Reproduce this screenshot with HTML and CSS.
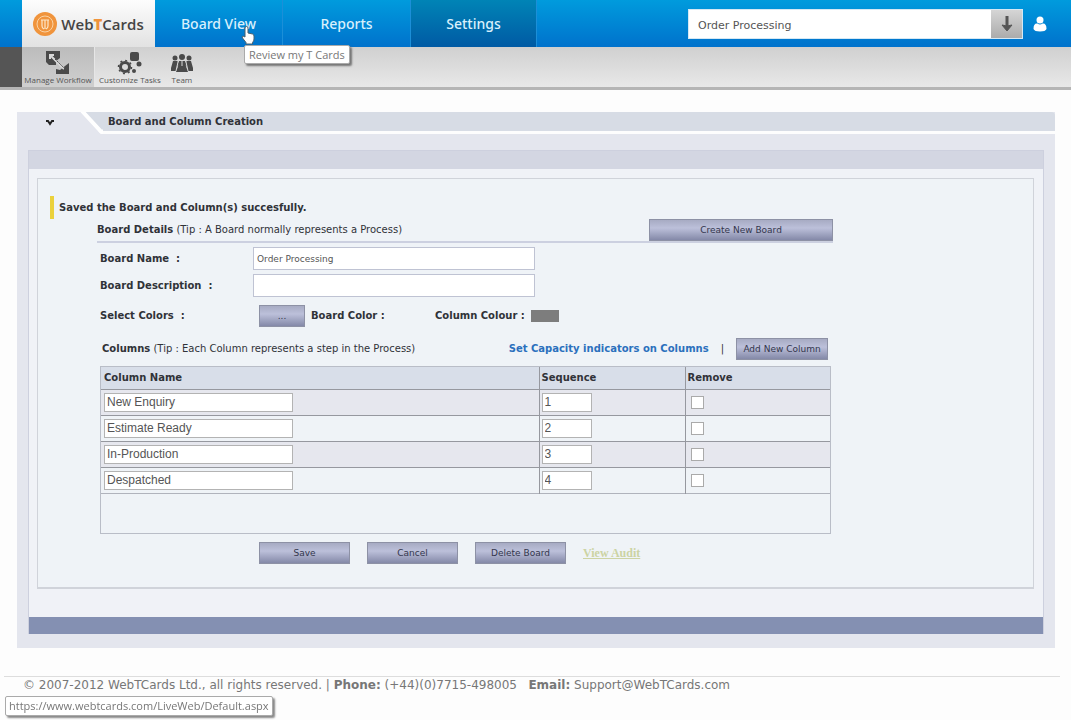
FILE: index.html
```html
<!DOCTYPE html>
<html lang="en">
<head>
    <meta charset="utf-8">
    <title>WebTCards - Board and Column Creation</title>
    <link rel="stylesheet" href="styles.css">
</head>
<body>
    <header class="header">
        <a class="logo" href="#">
            <svg width="24" height="26" viewBox="0 0 24 26">
                <circle cx="12" cy="13" r="12" fill="#f0943c"/>
                <circle cx="12" cy="13" r="8" fill="none" stroke="#fbd3a4" stroke-width="1"/>
                <path d="M8 9h8M9 9v6q0 2 2 3M15 9v6q0 2-2 3M12 9v9" fill="none" stroke="#fde6c8" stroke-width="1.2"/>
            </svg>
            <span>Web<b>T</b>Cards</span>
        </a>
        <nav class="nav">
            <a href="#" class="nav-link">Board View
                <span class="tooltip">Review my T Cards</span>
                <svg class="pointer" width="14" height="19" viewBox="0 0 14 19">
                    <path d="M4 2q0-1.500 1.500-1.500T7 2v5l4.500 1Q13 8.500 13 10v3q0 2-1.500 3.500V18H5v-1.500L1.500 12Q.5 10.500 2 10l2 1z" fill="#fff" stroke="#49606f"/>
                </svg>
            </a>
            <a href="#" class="nav-link">Reports</a>
            <a href="#" class="nav-link active">Settings</a>
        </nav>
        <div class="board-picker">
            <select aria-label="Board"><option>Order Processing</option></select>
            <button aria-label="Open board">
                <svg width="14" height="18" viewBox="0 0 14 18"><path d="M7 1v11" stroke="#555" stroke-width="3"/><path d="M2 10q5 2 10 0l-5 6z" fill="#555" stroke="#555" stroke-linejoin="round"/></svg>
            </button>
        </div>
        <a class="user" href="#" aria-label="My account">
            <svg width="14" height="18" viewBox="0 0 14 18"><circle cx="7" cy="5" r="3.500" fill="#fff"/><path d="M.5 14q0-6 4-5.500 2.500 2 5 0 4-.5 4 5.500-1 2.500-6.500 2.500T.5 14z" fill="#fff"/></svg>
        </a>
    </header>

    <div class="toolbar">
        <a href="#" class="tool selected">
            <svg width="26" height="26" viewBox="0 0 26 26">
                <path d="M1 1h14v7l-4 3v4H4l-3-3z" fill="#4a4a4a"/>
                <path d="M24 13v11H11v-5l4 1 5-4z" fill="#4a4a4a"/>
                <path d="M5 5l14 14M5 9V5h4" fill="none" stroke="#d8d8d8" stroke-width="2"/>
                <path d="M10 9l11 11" stroke="#4a4a4a" stroke-width="1" stroke-dasharray="2 1"/>
            </svg>
            Manage Workflow
        </a>
        <a href="#" class="tool">
            <svg width="26" height="26" viewBox="0 0 26 26">
                <circle cx="8" cy="17" r="4.500" fill="none" stroke="#4a4a4a" stroke-width="3"/>
                <circle cx="8" cy="17" r="6.500" fill="none" stroke="#4a4a4a" stroke-width="1.500" stroke-dasharray="2 3"/>
                <rect x="13" y="2" width="9" height="9" rx="2" fill="#4a4a4a"/>
                <circle cx="22" cy="14" r="2.500" fill="#4a4a4a"/>
                <circle cx="17" cy="21" r="2" fill="#4a4a4a"/>
            </svg>
            Customize Tasks
        </a>
        <a href="#" class="tool">
            <svg width="26" height="26" viewBox="0 0 26 26" fill="#4a4a4a">
                <circle cx="6" cy="8" r="2.500"/><circle cx="13" cy="7" r="3"/><circle cx="20" cy="8" r="2.500"/>
                <path d="M4 11h4l2 2-2 4v4H2v-3zM18 11h4l2 7v3h-6v-4l-2-4zM10 11h6l1 5 2 6H7l2-6z"/>
                <path d="M9 12l-2 9M17 12l2 9M13 11v5" stroke="#dcdcdc"/>
            </svg>
            Team
        </a>
    </div>

    <main class="panel">
        <div class="panel-title">
            <svg class="panel-tab" width="86" height="22" viewBox="0 0 86 22">
                <path d="M0 0h64l20 22H0z" fill="#e4e6ee"/>
                <path d="M65 -1l19 20.500h2" fill="none" stroke="#fff" stroke-width="4"/>
                <path d="M29 9h2l2 3 2-3h2" fill="none" stroke="#222" stroke-width="2"/>
            </svg>
            <h1>Board and Column Creation</h1>
        </div>
        <div class="box">
            <div class="box-head"></div>
            <div class="box-body">
                <form class="content">
                    <p class="message">Saved the Board and Column(s) succesfully.</p>
                    <div class="form">
                        <div class="section-head">
                            <span><b>Board Details</b> (Tip : A Board normally represents a Process)</span>
                            <button type="button" class="btn create">Create New Board</button>
                        </div>
                        <div class="field">
                            <label for="name">Board Name &nbsp;:</label>
                            <input type="text" id="name" value="Order Processing">
                        </div>
                        <div class="field">
                            <label for="description">Board Description &nbsp;:</label>
                            <input type="text" id="description">
                        </div>
                        <div class="field colors">
                            <label for="colors">Select Colors &nbsp;:</label>
                            <button type="button" id="colors" class="btn pick">...</button>
                            <b class="board-color">Board Color :</b>
                            <b>Column Colour :</b>
                            <span class="swatch"></span>
                        </div>
                        <div class="columns-head">
                            <span><b>Columns</b> (Tip : Each Column represents a step in the Process)</span>
                            <a href="#" class="capacity">Set Capacity indicators on Columns</a>
                            <span class="divider">|</span>
                            <button type="button" class="btn add">Add New Column</button>
                        </div>
                        <div class="grid">
                            <table>
                                <thead>
                                    <tr><th class="col-name">Column Name</th><th class="col-seq">Sequence</th><th>Remove</th></tr>
                                </thead>
                                <tbody>
                                    <tr>
                                        <td><input type="text" class="name" aria-label="Column name 1" value="New Enquiry"></td>
                                        <td><input type="text" class="seq" aria-label="Sequence 1" value="1"></td>
                                        <td><input type="checkbox" aria-label="Remove New Enquiry"></td>
                                    </tr>
                                    <tr>
                                        <td><input type="text" class="name" aria-label="Column name 2" value="Estimate Ready"></td>
                                        <td><input type="text" class="seq" aria-label="Sequence 2" value="2"></td>
                                        <td><input type="checkbox" aria-label="Remove Estimate Ready"></td>
                                    </tr>
                                    <tr>
                                        <td><input type="text" class="name" aria-label="Column name 3" value="In-Production"></td>
                                        <td><input type="text" class="seq" aria-label="Sequence 3" value="3"></td>
                                        <td><input type="checkbox" aria-label="Remove In-Production"></td>
                                    </tr>
                                    <tr>
                                        <td><input type="text" class="name" aria-label="Column name 4" value="Despatched"></td>
                                        <td><input type="text" class="seq" aria-label="Sequence 4" value="4"></td>
                                        <td><input type="checkbox" aria-label="Remove Despatched"></td>
                                    </tr>
                                </tbody>
                            </table>
                        </div>
                        <div class="actions">
                            <button type="button" class="btn">Save</button>
                            <button type="button" class="btn">Cancel</button>
                            <button type="button" class="btn">Delete Board</button>
                            <a href="#" class="audit">View Audit</a>
                        </div>
                    </div>
                </form>
            </div>
            <div class="box-foot"></div>
        </div>
    </main>

    <footer class="footer">
        © 2007-2012 WebTCards Ltd., all rights reserved. | <b>Phone:</b> (+44)(0)7715-498005 &nbsp; <b>Email:</b> Support@WebTCards.com
    </footer>
    <div class="status">https://www.webtcards.com/LiveWeb/Default.aspx</div>
</body>
</html>
```

FILE: styles.css
```css
* { box-sizing: border-box; }
body { margin: 0; background: #fdfdfd; color: #303238; font: 10px/12px "DejaVu Sans", Verdana, sans-serif; }
a { text-decoration: none; }
button, input, select { font-family: inherit; margin: 0; }

/* top bar */
.header { display: flex; align-items: center; height: 47px; padding-left: 22px; background: linear-gradient(#009bdd, #0072cc); }
.logo { display: flex; align-items: center; justify-content: center; gap: 4px; width: 133px; height: 47px; background: linear-gradient(#fdfdfd, #e2e2e2); color: #444; font: 600 15px/20px "Open Sans", sans-serif; }
.logo b { color: #f0943c; }
.nav { display: flex; align-self: stretch; }
.nav-link { position: relative; display: flex; align-items: center; justify-content: center; width: 128px; border-right: 1px solid #1c8fd8; color: #d8f0fc; font: 500 14px/20px "Noto Sans", sans-serif; }
.nav-link.active { width: 126px; background: linear-gradient(#0084b6, #005aa4); }
.tooltip { position: absolute; left: 89px; top: 45px; z-index: 1; padding: 1px 4px; background: #fff; border: 1px solid #aaa; border-radius: 2px; box-shadow: 2px 2px 2px #777; color: #777; font: 11px/15px "Open Sans", sans-serif; white-space: nowrap; }
.pointer { position: absolute; left: 86px; top: 26px; z-index: 2; }
.board-picker { display: flex; width: 335px; height: 30px; margin-left: auto; border: 1px solid #d5e8f4; background: #fff; }
.board-picker select { flex: 1; padding: 3px 9px 0; border: 0; background: #fff; color: #555; font-size: 11px; appearance: none; }
.board-picker button { display: flex; align-items: center; justify-content: center; width: 31px; padding: 0; border: 0; background: linear-gradient(#d5d5d5, #ababab); }
.user { display: flex; margin: 0 24px 0 10px; }

.toolbar { display: flex; height: 43px; padding-left: 22px; border-bottom: 3px solid #b5b5b5; background: linear-gradient(90deg, #555 22px, transparent 22px), linear-gradient(#d0d0d0, #e8e8e8); }
.tool { display: flex; flex-direction: column; align-items: center; padding: 3px 4px 0; color: #555; font: 8px/8px "Open Sans", sans-serif; }
.tool.selected { width: 73px; background: linear-gradient(#bcbcbc, #cfcfcf); border-right: 1px solid #e6e6e6; padding: 3px 0 0; }

/* main panel */
.panel { margin: 22px 16px 0 17px; padding-bottom: 14px; background: #e4e6ee; }
.panel-title { display: flex; height: 22px; border-bottom: 3px solid #fdfdfd; border-radius: 0 4px 0 0; background: #d7dce5; }
.panel-tab { flex: none; }
.panel-title h1 { margin: 0 0 0 5px; font-size: 10px; line-height: 20px; }
.box { margin: 16px 11px 0; border: 1px solid #cdd0de; border-bottom: 0; background: #f0f2f7; }
.box-head { height: 18px; background: #d3d6e2; }
.box-body { padding: 9px 9px 28px 8px; }
.box-foot { height: 17px; background: #8490b2; }
.content { border: 1px solid #d0d3da; border-bottom-width: 2px; background: #eff3f7; padding: 17px 12px 23px; }
.message { margin: 0; padding-left: 5px; border-left: 4px solid #ebd13c; font-weight: bold; line-height: 23px; }
.form { max-width: 783px; padding-left: 47px; }

.btn { width: 91px; height: 22px; padding: 0; border: 1px solid #8d91a5; background: linear-gradient(#a7abc3, #bcc0da 40%, #8489a8); color: #33364c; font: 9px/12px "DejaVu Sans", sans-serif; }
.btn.create { width: 184px; }
.btn.pick { width: 46px; margin-left: 6px; }
.btn.add { width: 92px; }

.section-head { display: flex; align-items: center; justify-content: space-between; border-bottom: 2px solid #ccd0e0; }
.field { display: flex; align-items: center; height: 27px; padding-left: 3px; }
.field:nth-child(2) { margin-top: 2px; }
.field label { width: 153px; font-weight: bold; }
.field input { width: 282px; height: 23px; padding: 0 3px; border: 1px solid #bfc3d3; background: #fff; color: #555; font-size: 9px; }
.colors { height: 34px; }
.board-color { width: 124px; margin-left: 6px; }
.swatch { width: 28px; height: 12px; margin-left: 6px; background: #7d7d7d; }
.columns-head { display: flex; align-items: center; height: 31px; padding: 0 5px; }
.capacity { margin-left: auto; color: #2b70bd; font-weight: bold; }
.divider { margin: 0 12px; }

.grid { width: 731px; max-width: 100%; min-height: 168px; margin: 2px 0 0 3px; border: 1px solid #b9bdc7; }
table { width: 100%; border-collapse: collapse; border-bottom: 1px solid #b0b3bc; }
th { height: 22px; padding: 0 3px; background: #d8dee9; text-align: left; }
td { height: 26px; padding: 0 3px; border-top: 1px solid #96989f; }
th + th, td + td { border-left: 1px solid #96989f; padding: 0 2px; }
.col-name { width: 438px; }
.col-seq { width: 146px; }
tbody tr:nth-child(odd) { background: #e6e7ee; }
td input[type=text] { display: block; height: 19px; padding: 0 2px; border: 1px solid #b3b3b3; background: #fff; color: #555; font: 12px/16px "Liberation Sans", Arial, sans-serif; }
.name { width: 189px; }
.seq { width: 50px; }
td input[type=checkbox] { display: block; width: 13px; height: 13px; margin-left: 3px; border: 1px solid #aaa; background: #fff; appearance: none; }

.actions { display: flex; align-items: center; gap: 17px; padding: 8px 0 0 162px; }
.audit { color: #ccd3a3; font: bold 12px/14px "Liberation Serif", serif; text-decoration: underline; }

.footer { margin: 28px 11px 0 4px; padding: 0 19px; border-top: 1px solid #ddd; color: #777; font-size: 12px; line-height: 16px; }
.status { position: fixed; left: 5px; bottom: 4px; padding: 1px 3px; border: 1px solid #aaa; border-radius: 2px; background: #fff; box-shadow: 2px 2px 2px #888; color: #777; font: 11px/16px "Open Sans", sans-serif; }
```
